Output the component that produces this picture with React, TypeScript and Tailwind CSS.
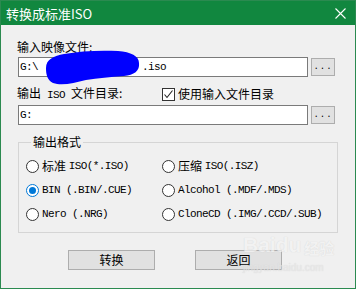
import React from "react";

const cn = "font-['Noto_Sans_CJK_SC',sans-serif] text-[12px]";
const asc = "font-['Liberation_Mono',monospace] text-[11px] tracking-[-0.6px]";

function Radio({ checked }: { checked?: boolean }) {
  return (
    <span
      className={
        "flex h-[13px] w-[13px] shrink-0 items-center justify-center rounded-full border bg-white " +
        (checked ? "border-[#0078d7]" : "border-[#333333]")
      }
    >
      {checked && <span className="h-[7px] w-[7px] rounded-full bg-[#0078d7]" />}
    </span>
  );
}

function Option({ checked, zh, en }: { checked?: boolean; zh?: string; en: string }) {
  return (
    <div className="flex h-[14px] items-center">
      <Radio checked={checked} />
      <span className="ml-[3px] flex items-center text-[#000] leading-[14px]">
        {zh && <span className={cn}>{zh}&nbsp;</span>}
        <span className={asc}>{en}</span>
      </span>
    </div>
  );
}

function Browse() {
  return (
    <button className="ml-[3px] flex h-[18px] w-[24px] items-end justify-center border border-[#adadad] bg-[#e1e1e1] pb-[3px] text-[#000]">
      <span className="text-[9px] leading-none tracking-[1px] font-['Liberation_Mono',monospace]">...</span>
    </button>
  );
}

export default function App() {
  return (
    <div className="relative h-[291px] w-[357px] overflow-hidden bg-white">
      <div className="flex h-[289px] w-[356px] flex-col border border-[#2b8a50] bg-[#f0f0f0]">
        {/* title bar */}
        <div className="flex h-[24px] shrink-0 items-center justify-between bg-[#11873f] pl-[5px] pr-[9px]">
          <span className="font-['Noto_Sans_CJK_SC',sans-serif] text-[13px] leading-none text-white">转换成标准ISO</span>
          <svg width="11" height="11" viewBox="0 0 11 11">
            <path d="M0.5 0.5 L10.5 10.5 M10.5 0.5 L0.5 10.5" stroke="#ffffff" strokeWidth="1.1" />
          </svg>
        </div>

        <div className="flex flex-col pl-[16px] pt-[15px]">
          <div className={cn + " h-[14px] leading-[14px] text-black"}>输入映像文件:</div>

          <div className="mt-[3px] flex items-center">
            <div className="ml-[1px] flex h-[20px] w-[290px] items-center border border-[#7a7a7a] bg-white pl-[1px]">
              <span className={asc}>G:\</span>
              <span className="inline-block w-[104px]" />
              <span className={asc}>.iso</span>
            </div>
            <Browse />
          </div>

          <div className="mt-[10px] flex h-[14px] items-center">
            <div className={cn + " w-[145px] leading-[14px] text-black"}>
              输出<span className={asc}> ISO </span>文件目录:
            </div>
            <span className="flex h-[13px] w-[13px] items-center justify-center border border-[#333333] bg-white">
              <svg width="11" height="11" viewBox="0 0 11 11">
                <path d="M1.5 5.5 L4 8.5 L9.5 1.5" fill="none" stroke="#222" strokeWidth="1.1" />
              </svg>
            </span>
            <span className={cn + " ml-[3px] leading-[14px] text-black"}>使用输入文件目录</span>
          </div>

          <div className="mt-[4px] flex items-center">
            <div className="ml-[1px] flex h-[20px] w-[290px] items-center border border-[#7a7a7a] bg-white pl-[1px]">
              <span className={asc}>G:</span>
            </div>
            <Browse />
          </div>

          <fieldset className="ml-[1px] mt-[10px] h-[98px] w-[320px] border border-[#d5d5d5] pl-[7px] pt-[10px]">
            <legend className={cn + " ml-[5px] px-[2px] leading-[14px] text-black"}>输出格式</legend>
            <div className="grid grid-cols-[136px_1fr] gap-y-[10px]">
              <Option zh="标准" en="ISO(*.ISO)" />
              <Option zh="压缩" en="ISO(.ISZ)" />
              <Option checked en="BIN (.BIN/.CUE)" />
              <Option en="Alcohol (.MDF/.MDS)" />
              <Option en="Nero (.NRG)" />
              <Option en="CloneCD (.IMG/.CCD/.SUB)" />
            </div>
          </fieldset>

          <div className="mt-[17px] flex items-center pl-[51px]">
            <button className={cn + " h-[20px] w-[87px] border border-[#adadad] bg-[#e1e1e1] leading-none text-black"}>转换</button>
            <button className={cn + " ml-[40px] h-[20px] w-[87px] border border-[#adadad] bg-[#e1e1e1] leading-none text-black"}>返回</button>
          </div>
        </div>
      </div>

      {/* redaction scribble */}
      <svg className="pointer-events-none absolute left-0 top-0" width="357" height="291" viewBox="0 0 357 291">
        <path
          d="M46 68 C46 59 54 56 64 54 C80 51 100 50 118 51 C131 52 139 56 139 63 C140 71 134 75 124 76 C110 77 98 78 86 80 C74 83 62 86 53 83 C47 80 46 74 46 68 Z"
          fill="#0000ff"
        />
      </svg>

      {/* watermark */}
      <div className="pointer-events-none absolute left-[243px] top-[234px] flex flex-col items-start opacity-70">
        <div className="flex items-end">
          <span className="font-['Liberation_Sans',sans-serif] text-[21px] font-bold leading-none text-[#f4f4f4] [text-shadow:0_0_1px_#c8c8c8]">Baidu</span>
          <span className="ml-[3px] font-['Noto_Sans_CJK_SC',sans-serif] text-[15px] font-bold leading-none text-[#f4f4f4] [text-shadow:0_0_1px_#c8c8c8]">经验</span>
        </div>
        <span className="mt-[8px] font-['Liberation_Sans',sans-serif] text-[10px] leading-none text-[#e6e6e6] [text-shadow:0_0_1px_#cccccc]">jingyan.baidu.com</span>
      </div>
    </div>
  );
}
